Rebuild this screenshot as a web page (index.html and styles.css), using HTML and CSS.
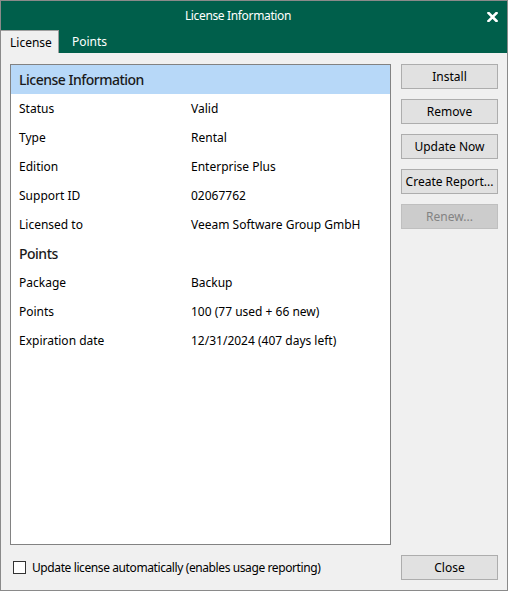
FILE: index.html
```html
<!DOCTYPE html>
<html>
<head>
<meta charset="utf-8">
<link rel="stylesheet" href="styles.css">
</head>
<body>
<div class="window">
  <div class="titlebar">
    <span class="title">License Information</span>
    <svg class="close-x" width="11" height="10" viewBox="0 0 11 10"><path d="M1.5 1 L9.5 9 M9.5 1 L1.5 9" stroke="#fff" stroke-width="2.6" stroke-linecap="square"/></svg>
  </div>
  <div class="tabs">
    <div class="tab active">License</div>
    <div class="tab">Points</div>
  </div>
  <div class="body">
    <div class="list">
      <div class="list-header">License Information</div>
      <div class="row"><span>Status</span><span>Valid</span></div>
      <div class="row"><span>Type</span><span>Rental</span></div>
      <div class="row"><span>Edition</span><span>Enterprise Plus</span></div>
      <div class="row"><span>Support ID</span><span>02067762</span></div>
      <div class="row"><span>Licensed to</span><span>Veeam Software Group GmbH</span></div>
      <div class="row section">Points</div>
      <div class="row"><span>Package</span><span>Backup</span></div>
      <div class="row"><span>Points</span><span>100 (77 used + 66 new)</span></div>
      <div class="row"><span>Expiration date</span><span>12/31/2024 (407 days left)</span></div>
    </div>
    <div class="buttons">
      <div class="btn">Install</div>
      <div class="btn">Remove</div>
      <div class="btn">Update Now</div>
      <div class="btn">Create Report...</div>
      <div class="btn disabled">Renew...</div>
    </div>
    <label class="check-row"><span class="checkbox"></span><span class="check-label">Update license automatically (enables usage reporting)</span></label>
    <div class="btn close">Close</div>
  </div>
</div>
</body>
</html>
```

FILE: styles.css
```css
html, body {
  margin: 0;
  padding: 0;
}
body {
  font-family: "Noto Sans", "Open Sans", sans-serif;
  font-size: 12px;
  color: #000;
}
.window {
  box-sizing: border-box;
  width: 508px;
  height: 591px;
  border: 1px solid #8a8a8a;
  display: flex;
  flex-direction: column;
  background: #f0f0f0;
}
.titlebar {
  height: 29px;
  background: #005f4b;
  color: #fff;
  display: flex;
  align-items: center;
  justify-content: center;
  position: relative;
  padding-right: 32px;
}
.title {
  font-size: 12px;
  letter-spacing: -0.35px;
}
.close-x {
  position: absolute;
  right: 9px;
  top: 11px;
}
.tabs {
  height: 23px;
  background: #005f4b;
  display: flex;
  align-items: stretch;
}
.tab {
  color: #fff;
  padding: 0 10px 0 13px;
  display: flex;
  align-items: center;
}
.tab.active {
  background: #f0f0f0;
  color: #000;
  border-top: 1px solid #a0a0a0;
  border-right: 1px solid #a0a0a0;
  padding: 0 8px 0 9px;
  width: 40px;
}
.body {
  flex: 1;
  padding: 11px 9px 10px 9px;
  display: grid;
  grid-template-columns: 381px 97px;
  grid-template-rows: 481px 25px;
  column-gap: 10px;
  row-gap: 10px;
}
.list {
  box-sizing: border-box;
  border: 1px solid #828282;
  background: #fff;
}
.list-header {
  height: 29px;
  background: #b7d8f8;
  font-size: 14px;
  font-weight: 500;
  letter-spacing: -0.5px;
  color: #1a1a1a;
  padding-left: 8px;
  display: flex;
  align-items: center;
}
.row {
  height: 29px;
  display: grid;
  grid-template-columns: 172px 1fr;
  align-items: center;
  padding-left: 8px;
}
.row.section {
  display: flex;
  font-size: 14px;
  font-weight: 500;
  letter-spacing: -0.5px;
  color: #1a1a1a;
}
.buttons {
  display: flex;
  flex-direction: column;
  gap: 10px;
}
.btn {
  box-sizing: border-box;
  height: 25px;
  border: 1px solid #adadad;
  background: #e1e1e1;
  display: flex;
  align-items: center;
  justify-content: center;
}
.btn.disabled {
  background: #cccccc;
  border-color: #bfbfbf;
  color: #838383;
}
.check-row {
  display: flex;
  align-items: center;
  gap: 6px;
  padding-left: 3px;
}
.check-label {
  letter-spacing: -0.4px;
}
.checkbox {
  box-sizing: border-box;
  width: 13px;
  height: 13px;
  border: 1px solid #333;
  background: #fff;
}
```
